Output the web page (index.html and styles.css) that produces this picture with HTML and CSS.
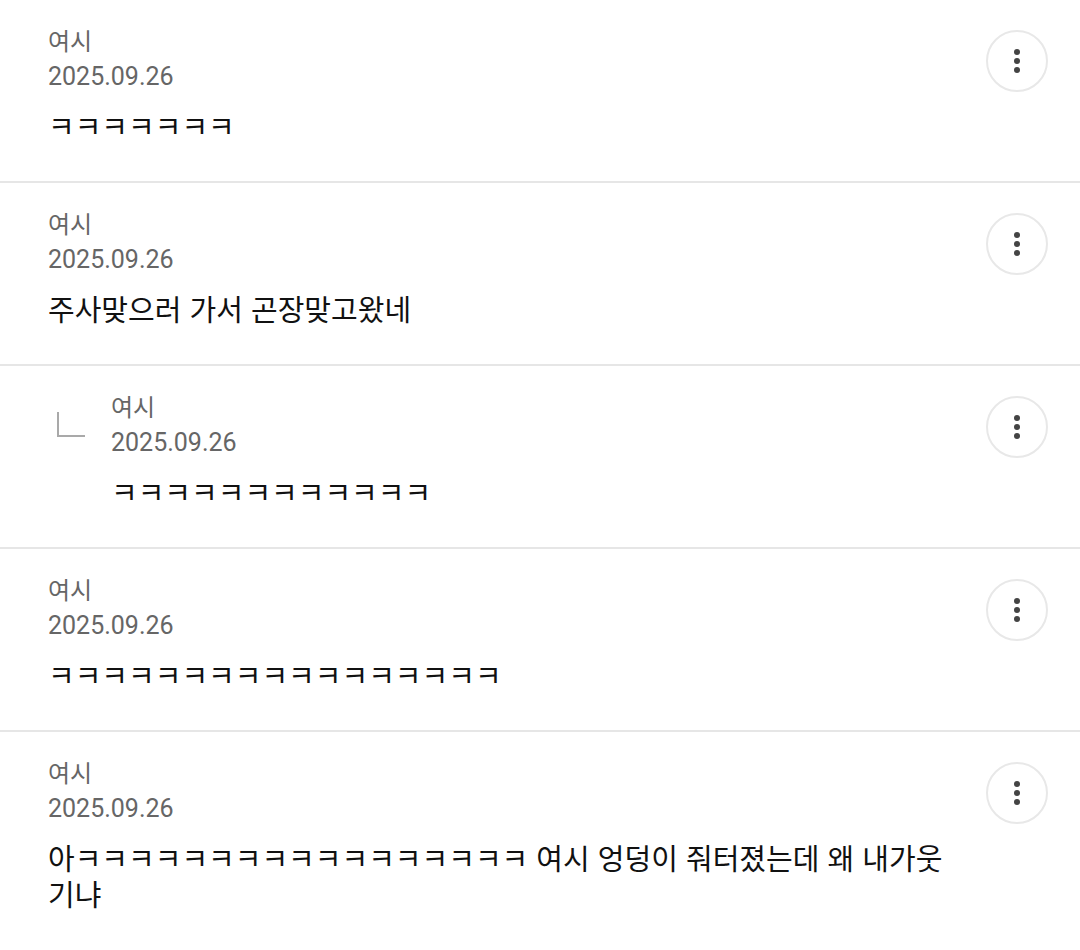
FILE: index.html
```html
<!DOCTYPE html>
<html lang="ko">
  <head>
    <meta charset="UTF-8" />
    <meta name="viewport" content="width=device-width, initial-scale=1.0" />
    <title>댓글</title>
    <link rel="stylesheet" href="styles.css">
  </head>
  <body>
    <ul class="comment-list">
      <li class="comment">
        <div class="comment-body">
          <div class="author">여시</div>
          <div class="date">2025.09.26</div>
          <p class="text">ㅋㅋㅋㅋㅋㅋㅋ</p>
        </div>
        <button class="more-btn" aria-label="더보기"><span class="dots"></span></button>
      </li>

      <li class="comment">
        <div class="comment-body">
          <div class="author">여시</div>
          <div class="date">2025.09.26</div>
          <p class="text">주사맞으러 가서 곤장맞고왔네</p>
        </div>
        <button class="more-btn" aria-label="더보기"><span class="dots"></span></button>
      </li>

      <li class="comment reply">
        <div class="reply-mark">
          <svg width="30" height="28" viewBox="0 0 30 28" fill="none" stroke="#a9a9a9" stroke-width="2">
            <polyline points="2 1 2 25 29 25"></polyline>
          </svg>
        </div>
        <div class="comment-body">
          <div class="author">여시</div>
          <div class="date">2025.09.26</div>
          <p class="text">ㅋㅋㅋㅋㅋㅋㅋㅋㅋㅋㅋㅋ</p>
        </div>
        <button class="more-btn" aria-label="더보기"><span class="dots"></span></button>
      </li>

      <li class="comment">
        <div class="comment-body">
          <div class="author">여시</div>
          <div class="date">2025.09.26</div>
          <p class="text">ㅋㅋㅋㅋㅋㅋㅋㅋㅋㅋㅋㅋㅋㅋㅋㅋㅋ</p>
        </div>
        <button class="more-btn" aria-label="더보기"><span class="dots"></span></button>
      </li>

      <li class="comment">
        <div class="comment-body">
          <div class="author">여시</div>
          <div class="date">2025.09.26</div>
          <p class="text">아ㅋㅋㅋㅋㅋㅋㅋㅋㅋㅋㅋㅋㅋㅋㅋㅋㅋ 여시 엉덩이 줘터졌는데 왜 내가웃기냐</p>
        </div>
        <button class="more-btn" aria-label="더보기"><span class="dots"></span></button>
      </li>
    </ul>
  </body>
</html>
```

FILE: styles.css
```css
:root {
  --text-color: #111111;
  --meta-color: #666666;
  --divider: #e6e6e6;
  --btn-border: #e8e8e8;
}

* {
  margin: 0;
  padding: 0;
  box-sizing: border-box;
}

body {
  background-color: #ffffff;
  color: var(--text-color);
  font-family: Roboto, "Noto Sans CJK KR", sans-serif;
  overflow: hidden;
}

.comment-list {
  list-style: none;
}

.comment {
  display: flex;
  align-items: flex-start;
  gap: 16px;
  padding: 22px 32px 38px 48px;
  border-bottom: 2px solid var(--divider);
}

.comment:last-child {
  border-bottom: none;
}

.comment-body {
  flex: 1;
  min-width: 0;
  padding-right: 8px;
}

.author {
  font-family: "Noto Sans CJK KR", sans-serif;
  font-size: 24px;
  line-height: 35px;
  color: var(--meta-color);
}

.date {
  margin-top: 2px;
  font-family: Roboto, sans-serif;
  font-size: 25px;
  line-height: 35px;
  color: var(--meta-color);
}

.text {
  margin-top: 13px;
  font-family: "Noto Sans CJK KR", sans-serif;
  font-size: 29px;
  line-height: 36px;
  color: var(--text-color);
}

/* reply row */
.reply-mark {
  width: 63px;
  flex-shrink: 0;
  padding: 23px 0 0 8px;
  margin-right: -16px;
}

.reply-mark svg {
  display: block;
}

.more-btn {
  flex-shrink: 0;
  width: 62px;
  height: 62px;
  margin-top: 8px;
  border: 2px solid var(--btn-border);
  border-radius: 50%;
  background-color: #ffffff;
  display: flex;
  align-items: center;
  justify-content: center;
  cursor: pointer;
}

.dots {
  width: 6px;
  height: 6px;
  border-radius: 50%;
  background-color: #444444;
  box-shadow: 0 -9px 0 #444444, 0 9px 0 #444444;
}
```
